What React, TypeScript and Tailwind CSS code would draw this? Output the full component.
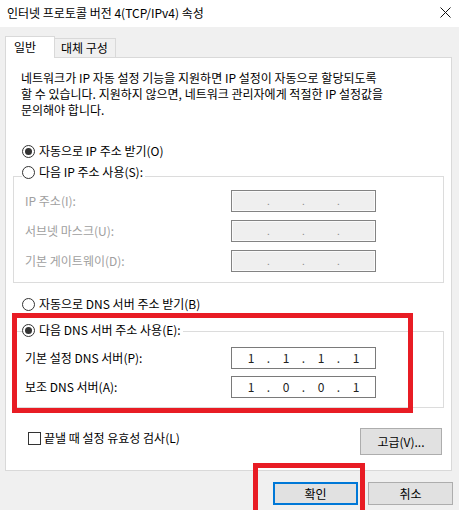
import { Fragment } from "react";

function Radio({ checked }: { checked?: boolean }) {
  return (
    <span className="w-[13px] h-[13px] rounded-full border border-[#333333] bg-white flex items-center justify-center shrink-0">
      {checked && <span className="w-[7px] h-[7px] rounded-full bg-[#333333]" />}
    </span>
  );
}

function IpBox({ values, disabled }: { values?: string[]; disabled?: boolean }) {
  return (
    <div
      className={
        disabled
          ? "w-[145px] h-[22px] border border-[#838383] bg-[#efefef] shadow-[inset_0_0_0_1px_#fafafa]"
          : "w-[145px] h-[22px] border border-[#7a7a7a] bg-white"
      }
    >
      <div className="flex items-center h-full pl-[4px] leading-[20px]">
        {[0, 1, 2, 3].map((i) => (
          <Fragment key={i}>
            <span className="w-[30px] text-center text-[#222222]">{values ? values[i] : ""}</span>
            {i < 3 && (
              <span className={disabled ? "w-[5px] text-center text-[#8a8a8a] text-[10px]" : "w-[5px] text-center text-[#333333]"}>
                .
              </span>
            )}
          </Fragment>
        ))}
      </div>
    </div>
  );
}

function Row({ label, values, disabled }: { label: string; values?: string[]; disabled?: boolean }) {
  return (
    <div className="flex items-center h-[22px] pl-[11px]">
      <span className={disabled ? "w-[206px] text-[#a0a0a0]" : "w-[206px] text-black"}>{label}</span>
      <IpBox values={values} disabled={disabled} />
    </div>
  );
}

export default function App() {
  return (
    <div className="relative w-[459px] h-[510px] overflow-hidden bg-[#f0f0f0] text-[12px] text-black font-['Noto_Sans_CJK_KR','Noto_Sans',sans-serif]">
      {/* Title bar */}
      <div className="h-[27px] bg-white flex items-center justify-between pl-[7px] pr-[8px]">
        <span className="leading-[20px] -mt-[1px]">인터넷 프로토콜 버전 4(TCP/IPv4) 속성</span>
        <svg width="11" height="11" viewBox="0 0 11 11" className="-mt-[3px]">
          <path d="M0.5 0.5 L10.5 10.5 M10.5 0.5 L0.5 10.5" stroke="#111" strokeWidth="1" />
        </svg>
      </div>

      {/* Tabs */}
      <div className="flex items-end pl-[5px] pt-[10px] h-[31px]">
        <div className="relative z-10 w-[50px] h-[22px] bg-white border border-b-0 border-[#d9d9d9] pl-[8px] leading-[19px]">
          일반
        </div>
        <div className="w-[61px] h-[19px] bg-[#f0f0f0] border border-l-0 border-b-0 border-[#d9d9d9] pl-[6px] leading-[17px] mb-[1px]">
          대체 구성
        </div>
      </div>

      {/* Panel */}
      <div className="ml-[5px] w-[447px] h-[414px] -mt-[1px] bg-white border border-[#d9d9d9]">
        <div className="mt-[12px] pl-[15px] leading-[16px] whitespace-nowrap">
          <div>네트워크가 IP 자동 설정 기능을 지원하면 IP 설정이 자동으로 할당되도록</div>
          <div>할 수 있습니다. 지원하지 않으면, 네트워크 관리자에게 적절한 IP 설정값을</div>
          <div>문의해야 합니다.</div>
        </div>

        <div className="mt-[23px] ml-[16px] flex items-center gap-[4px] h-[20px]">
          <Radio checked />
          <span>자동으로 IP 주소 받기(O)</span>
        </div>

        {/* IP group */}
        <div className="mt-[15px] ml-[7px] w-[431px] border border-[#dcdcdc] pb-[10px]">
          <div className="-mt-[15px] ml-[8px] w-fit bg-white pr-[2px] flex items-center gap-[4px] h-[20px]">
            <Radio />
            <span>다음 IP 주소 사용(S):</span>
          </div>
          <div className="mt-[8px] flex flex-col gap-[8px]">
            <Row label="IP 주소(I):" disabled />
            <Row label="서브넷 마스크(U):" disabled />
            <Row label="기본 게이트웨이(D):" disabled />
          </div>
        </div>

        <div className="mt-[11px] ml-[16px] flex items-center gap-[4px] h-[20px]">
          <Radio />
          <span>자동으로 DNS 서버 주소 받기(B)</span>
        </div>

        {/* DNS group */}
        <div className="mt-[17px] ml-[7px] w-[431px] border border-[#dcdcdc] pb-[9px]">
          <div className="-mt-[12px] ml-[8px] w-fit bg-white pr-[2px] flex items-center gap-[4px] h-[20px]">
            <Radio checked />
            <span>다음 DNS 서버 주소 사용(E):</span>
          </div>
          <div className="mt-[7px] flex flex-col gap-[7px]">
            <Row label="기본 설정 DNS 서버(P):" values={["1", "1", "1", "1"]} />
            <Row label="보조 DNS 서버(A):" values={["1", "0", "0", "1"]} />
          </div>
        </div>

        <div className="mt-[20px] flex items-start justify-between pl-[22px] pr-[9px]">
          <div className="flex items-center gap-[3px] h-[20px]">
            <span className="w-[13px] h-[13px] border border-[#333333] bg-white" />
            <span>끝낼 때 설정 유효성 검사(L)</span>
          </div>
          <button className="w-[82px] h-[27px] bg-[#e1e1e1] border border-[#adadad] leading-[20px]">고급(V)...</button>
        </div>
      </div>

      {/* Dialog buttons */}
      <div className="mt-[11px] flex justify-end gap-[10px] pr-[6px]">
        <button className="w-[85px] h-[23px] bg-[#e1e1e1] border border-[#0078d7] shadow-[inset_0_0_0_1px_#0078d7] leading-[20px]">
          확인
        </button>
        <button className="w-[85px] h-[23px] bg-[#e1e1e1] border border-[#adadad] leading-[20px]">취소</button>
      </div>

      {/* Red annotation boxes */}
      <div className="absolute left-[12px] top-[313px] w-[401px] h-[100px] border-[5px] border-[#e81c24] pointer-events-none" />
      <div className="absolute left-[253px] top-[463px] w-[112px] h-[52px] border-[5px] border-[#e81c24] pointer-events-none" />
    </div>
  );
}
